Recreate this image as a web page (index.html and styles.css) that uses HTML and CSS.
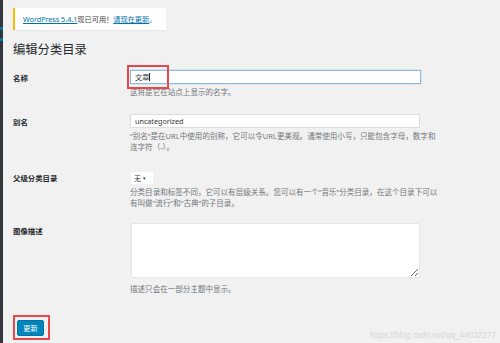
FILE: index.html
```html
<!DOCTYPE html>
<html lang="zh-CN">
<head>
    <meta charset="UTF-8">
    <meta name="viewport" content="width=device-width, initial-scale=1.0">
    <title>编辑分类目录</title>
    <link rel="stylesheet" href="styles.css">
</head>
<body>

    <div class="layout">
        <!-- Admin menu edge -->
        <div class="sidebar">
            <span class="menu-tick first"></span>
            <span class="menu-tick second"></span>
        </div>

        <div class="wrap">
            <!-- Update notice -->
            <div class="notice">
                <p><a href="#">WordPress 5.4.1</a>现已可用！<a href="#">请现在更新</a>。</p>
            </div>

            <h1>编辑分类目录</h1>

            <form class="edit-form">
                <div class="form-row">
                    <label for="name">名称</label>
                    <div class="field">
                        <div class="input-holder">
                            <input type="text" id="name" class="input focused" value="文章">
                            <span class="caret"></span>
                            <span class="mark name-mark"></span>
                        </div>
                        <p class="help">这将是它在站点上显示的名字。</p>
                    </div>
                </div>

                <div class="form-row">
                    <label for="slug">别名</label>
                    <div class="field">
                        <input type="text" id="slug" class="input" value="uncategorized">
                        <p class="help">“别名”是在URL中使用的别称，它可以令URL更美观。通常使用小写，只能包含字母，数字和连字符（-）。</p>
                    </div>
                </div>

                <div class="form-row parent-row">
                    <label for="parent">父级分类目录</label>
                    <div class="field">
                        <div class="select">无 <span class="arrow">▾</span></div>
                        <p class="help">分类目录和标签不同，它可以有层级关系。您可以有一个“音乐”分类目录，在这个目录下可以有叫做“流行”和“古典”的子目录。</p>
                    </div>
                </div>

                <div class="form-row desc-row">
                    <label for="description">图像描述</label>
                    <div class="field">
                        <textarea id="description" class="textarea"></textarea>
                        <p class="help">描述只会在一部分主题中显示。</p>
                    </div>
                </div>

                <div class="submit">
                    <div class="button-holder">
                        <button type="button" class="button">更新</button>
                        <span class="mark button-mark"></span>
                    </div>
                </div>
            </form>
        </div>
    </div>

    <div class="watermark">https://blog.csdn.net/qq_44032277</div>

</body>
</html>
```

FILE: styles.css
```css
/* General body style */
body {
    margin: 0;
    padding: 0;
    background-color: #f1f1f1;
    color: #444;
    font-family: 'Noto Sans', 'Noto Sans CJK SC', sans-serif;
    font-size: 7.3px;
    overflow: hidden;
}

.layout {
    display: flex;
    min-height: 343px;
}

/* Dark admin menu edge */
.sidebar {
    position: relative;
    width: 3px;
    background-color: #32373c;
}

.menu-tick {
    position: absolute;
    left: 0;
    width: 3px;
    height: 3px;
    background-color: #0073aa;
}

.menu-tick.first {
    top: 27px;
}

.menu-tick.second {
    top: 38px;
}

.wrap {
    flex: 1;
    padding-left: 10px;
}

/* Update notice */
.notice {
    display: flex;
    align-items: center;
    width: 151px;
    height: 22px;
    margin-top: 8px;
    background-color: #fff;
    border-left: 2px solid #ffb900;
    box-shadow: 0 1px 1px rgba(0, 0, 0, 0.04);
}

.notice p {
    margin: 0;
    padding-left: 8px;
    font-size: 7.2px;
    color: #444;
    white-space: nowrap;
}

.notice a {
    color: #0073aa;
    text-decoration: underline;
}

h1 {
    margin: 12px 0 4px;
    font-size: 12.3px;
    font-weight: 400;
    line-height: 16px;
    color: #23282d;
}

/* Form table */
.form-row {
    display: grid;
    grid-template-columns: 117px 1fr;
    padding: 8px 0;
}

.form-row label {
    padding-top: 1px;
    line-height: 14px;
    font-size: 7.4px;
    font-weight: 700;
    color: #23282d;
}

.parent-row {
    padding-bottom: 6px;
}

.parent-row label {
    padding-top: 2px;
}

.field {
    width: 308px;
}

.input-holder {
    position: relative;
    width: 291px;
}

.input {
    display: block;
    box-sizing: border-box;
    width: 290px;
    height: 14px;
    margin: 0;
    padding: 0 4px;
    border: 1px solid #ddd;
    background-color: #fff;
    font-family: 'Noto Sans', 'Noto Sans CJK SC', sans-serif;
    font-size: 7.2px;
    color: #32373c;
    outline: none;
}

.input.focused {
    width: 291px;
    border-color: #8ebbe6;
    box-shadow: 0 0 1px rgba(30, 140, 190, 0.6);
}

.caret {
    position: absolute;
    left: 19px;
    top: 3px;
    width: 1px;
    height: 8px;
    background-color: #222;
}

/* Red annotation boxes */
.mark {
    position: absolute;
    box-sizing: border-box;
    border: 2px solid #e8474b;
    pointer-events: none;
}

.name-mark {
    left: -3px;
    top: -5px;
    width: 42px;
    height: 24px;
}

.help {
    margin: 3px 0 0;
    line-height: 11px;
    font-size: 7.55px;
    color: #72777c;
}

.select {
    box-sizing: border-box;
    width: 22px;
    height: 12px;
    margin: 3px 0 0 1px;
    padding-left: 3px;
    background-color: #fff;
    line-height: 12px;
    font-size: 7px;
    color: #32373c;
}

.arrow {
    font-size: 5px;
    vertical-align: 1px;
}

.textarea {
    display: block;
    box-sizing: border-box;
    width: 289px;
    height: 55px;
    margin: 0 0 0 1px;
    border: 1px solid #e6e6e6;
    background-color: #fff;
    resize: both;
}

.desc-row .help {
    margin-top: 6px;
}

/* Submit button */
.submit {
    padding: 17px 0 0 4px;
}

.button-holder {
    position: relative;
    display: inline-block;
}

.button {
    display: block;
    width: 27px;
    height: 16px;
    padding: 0;
    border: 1px solid #0073aa;
    border-radius: 2px;
    background-color: #0085ba;
    color: #fff;
    font-family: 'Noto Sans CJK SC', sans-serif;
    font-size: 7.2px;
    cursor: pointer;
}

.button-mark {
    left: -4px;
    top: -5px;
    width: 37px;
    height: 25px;
}

/* Watermark */
.watermark {
    position: absolute;
    right: 4px;
    bottom: 3px;
    font-family: 'Liberation Sans', sans-serif;
    font-size: 8.2px;
    color: #d6d6d6;
}
```
